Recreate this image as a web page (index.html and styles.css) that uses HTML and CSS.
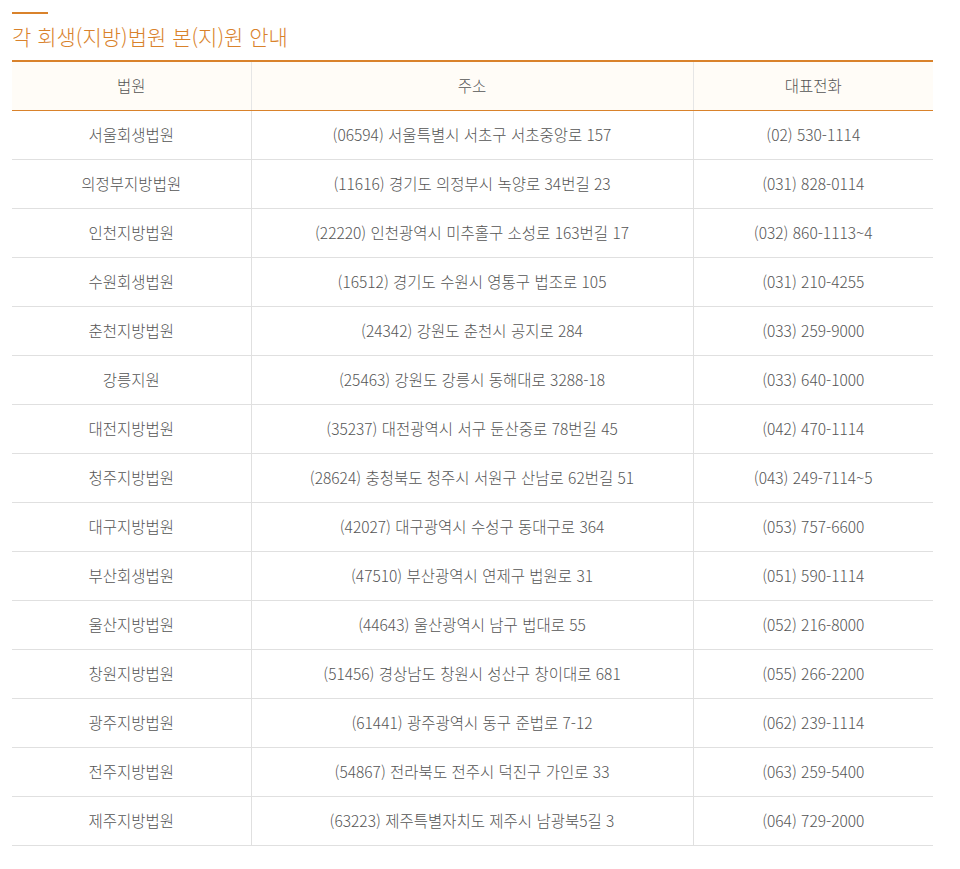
FILE: index.html
```html
<!DOCTYPE html>
<html lang="ko">
<head>
<meta charset="utf-8">
<link rel="stylesheet" href="styles.css">
</head>
<body>
<div class="wrap">
  <div class="accent"></div>
  <h2 class="title">각 회생(지방)법원 본(지)원 안내</h2>
  <table class="tbl">
    <colgroup><col class="c1"><col class="c2"><col class="c3"></colgroup>
    <thead>
      <tr><th>법원</th><th>주소</th><th>대표전화</th></tr>
    </thead>
    <tbody>
      <tr><td>서울회생법원</td><td>(06594) 서울특별시 서초구 서초중앙로 157</td><td>(02) 530-1114</td></tr>
      <tr><td>의정부지방법원</td><td>(11616) 경기도 의정부시 녹양로 34번길 23</td><td>(031) 828-0114</td></tr>
      <tr><td>인천지방법원</td><td>(22220) 인천광역시 미추홀구 소성로 163번길 17</td><td>(032) 860-1113~4</td></tr>
      <tr><td>수원회생법원</td><td>(16512) 경기도 수원시 영통구 법조로 105</td><td>(031) 210-4255</td></tr>
      <tr><td>춘천지방법원</td><td>(24342) 강원도 춘천시 공지로 284</td><td>(033) 259-9000</td></tr>
      <tr><td>강릉지원</td><td>(25463) 강원도 강릉시 동해대로 3288-18</td><td>(033) 640-1000</td></tr>
      <tr><td>대전지방법원</td><td>(35237) 대전광역시 서구 둔산중로 78번길 45</td><td>(042) 470-1114</td></tr>
      <tr><td>청주지방법원</td><td>(28624) 충청북도 청주시 서원구 산남로 62번길 51</td><td>(043) 249-7114~5</td></tr>
      <tr><td>대구지방법원</td><td>(42027) 대구광역시 수성구 동대구로 364</td><td>(053) 757-6600</td></tr>
      <tr><td>부산회생법원</td><td>(47510) 부산광역시 연제구 법원로 31</td><td>(051) 590-1114</td></tr>
      <tr><td>울산지방법원</td><td>(44643) 울산광역시 남구 법대로 55</td><td>(052) 216-8000</td></tr>
      <tr><td>창원지방법원</td><td>(51456) 경상남도 창원시 성산구 창이대로 681</td><td>(055) 266-2200</td></tr>
      <tr><td>광주지방법원</td><td>(61441) 광주광역시 동구 준법로 7-12</td><td>(062) 239-1114</td></tr>
      <tr><td>전주지방법원</td><td>(54867) 전라북도 전주시 덕진구 가인로 33</td><td>(063) 259-5400</td></tr>
      <tr><td>제주지방법원</td><td>(63223) 제주특별자치도 제주시 남광북5길 3</td><td>(064) 729-2000</td></tr>
    </tbody>
  </table>
</div>
</body>
</html>
```
FILE: styles.css
```css
html, body { margin: 0; padding: 0; background: #fff; }
body { font-family: "Noto Sans CJK KR", "Noto Sans", sans-serif; color: #555; }
.wrap { padding: 12px 27px 0 12px; }
.accent { width: 36px; height: 2px; background: #d9822b; }
.title {
  margin: 8px 0 0 0;
  font-size: 21px;
  font-weight: 300;
  color: #d9822b;
  line-height: 28px;
  height: 38px;
}
.tbl {
  width: 921px;
  border-collapse: collapse;
  border-top: 2px solid #d9822b;
  font-size: 15.5px;
  font-weight: 300;
}
.c1 { width: 239px; }
.c2 { width: 442px; }
.c3 { width: 240px; }
.tbl th {
  height: 46px;
  padding: 0 0 2px 0;
  background: #fffcf7;
  font-weight: 300;
  color: #555;
  border-bottom: 1px solid #d9822b;
  border-left: 1px solid #e6e6e6;
}
.tbl td {
  height: 46px;
  padding: 0 0 2px 0;
  text-align: center;
  border-bottom: 1px solid #e0e0e0;
  border-left: 1px solid #e0e0e0;
}
.tbl th:first-child, .tbl td:first-child { border-left: none; }
```
